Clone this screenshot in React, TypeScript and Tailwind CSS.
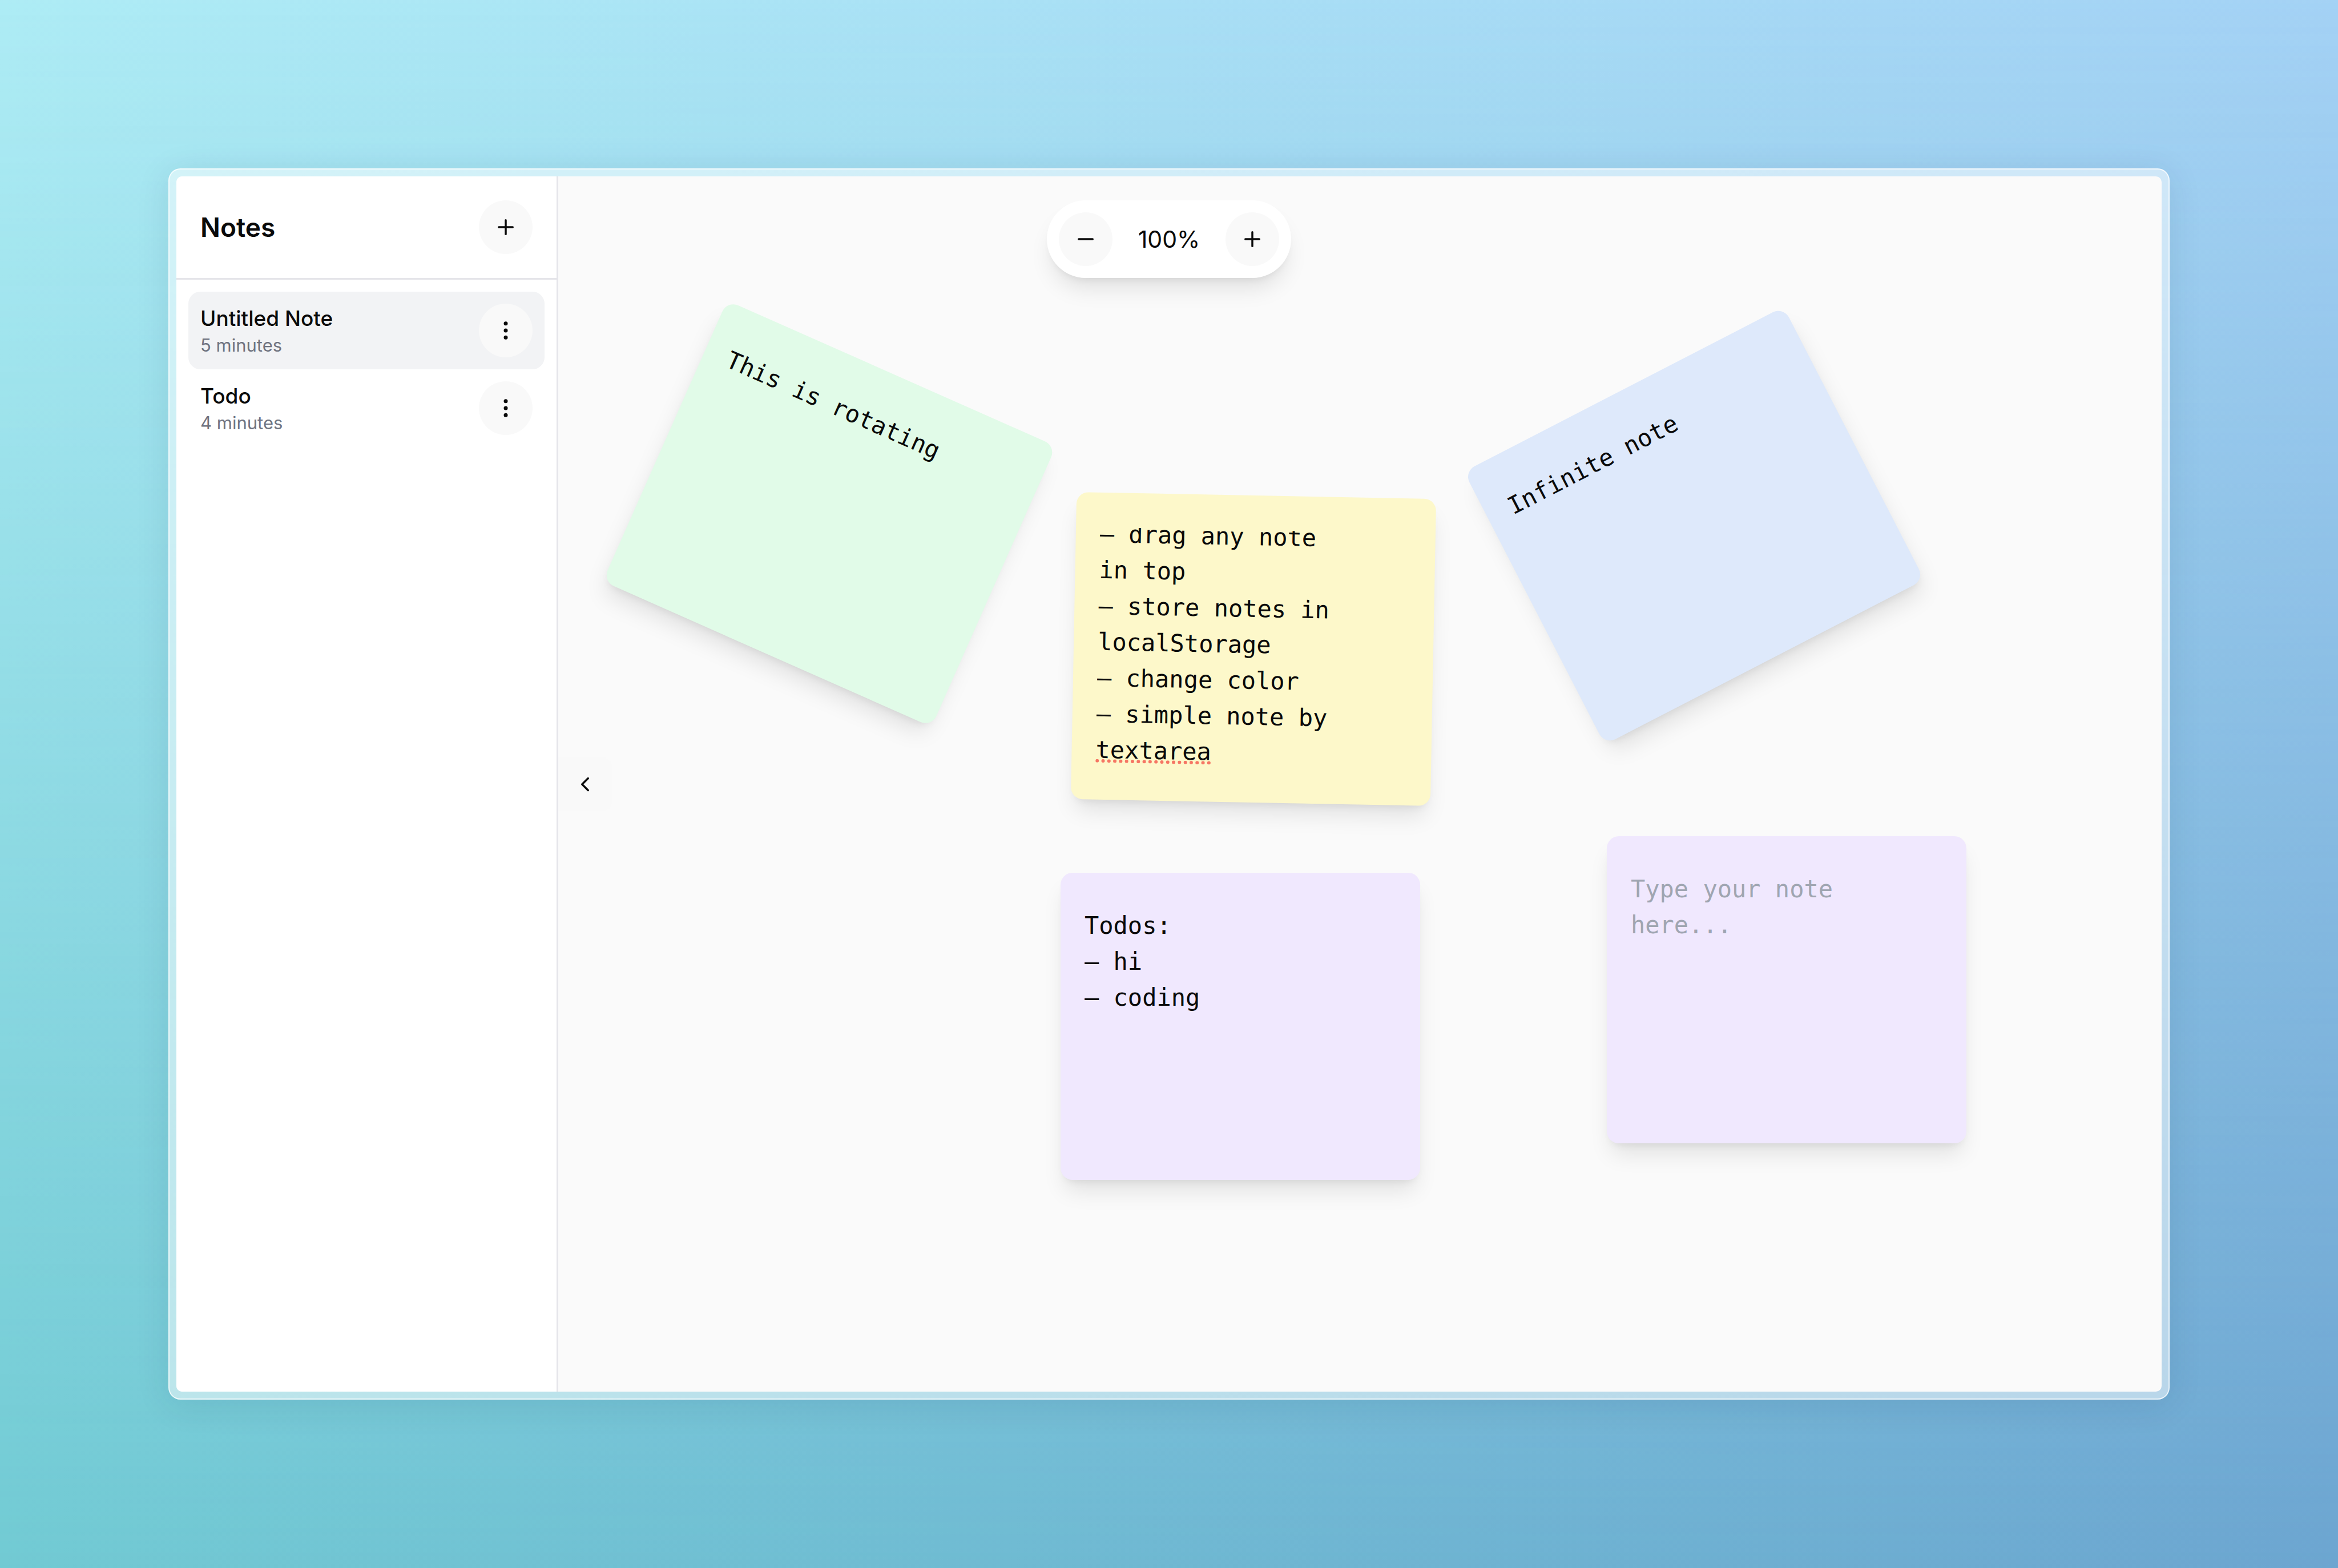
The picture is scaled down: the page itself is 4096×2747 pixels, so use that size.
import { useEffect, useRef, useState } from "react";
import { ChevronLeft, EllipsisVertical, Minus, Plus } from "lucide-react";

type StickyNote = {
  id: string;
  text: string;
  color: string;
  x: number;
  y: number;
  rotation: number;
  misspelled?: boolean;
};

const pages = [
  { id: "untitled", title: "Untitled Note", age: "5 minutes" },
  { id: "todo", title: "Todo", age: "4 minutes" },
];

const stickyNotes: StickyNote[] = [
  { id: "rotating", text: "This is rotating", color: "bg-[#e1fbe8]", x: 160, y: 322, rotation: 23.9 },
  {
    id: "features",
    text: "– drag any note in top\n– store notes in localStorage\n– change color\n– simple note by textarea",
    color: "bg-[#fdf8ca]",
    x: 903,
    y: 559,
    rotation: 1.1,
    misspelled: true,
  },
  { id: "infinite", text: "Infinite note", color: "bg-[#dee9fb]", x: 1675, y: 343, rotation: -27.3 },
  { id: "todos", text: "Todos:\n– hi\n– coding", color: "bg-[#f0e8fe]", x: 880, y: 1220, rotation: 0 },
  { id: "empty", text: "", color: "bg-[#f0e8fe]", x: 1837, y: 1156, rotation: 0 },
];

const roundButton =
  "flex size-[94px] shrink-0 items-center justify-center rounded-full bg-[#f9f9f9]";
const icon = "size-[42px]";
const lifted =
  "shadow-[0_26px_39px_-8px_rgba(0,0,0,0.1),0_10px_16px_-10px_rgba(0,0,0,0.1)]";

function Note({ note }: { note: StickyNote }) {
  const field = useRef<HTMLTextAreaElement>(null);

  // A note that overflows stays scrolled to its last line.
  useEffect(() => {
    if (field.current) field.current.scrollTop = field.current.scrollHeight;
  }, []);

  return (
    <article
      className={`absolute flex h-[538px] w-[630px] rounded-[21px] pt-[61px] pr-[158px] pb-[56px] pl-[42px] ${note.color} ${lifted}`}
      style={{ left: note.x, top: note.y, transform: `rotate(${note.rotation}deg)` }}
    >
      <textarea
        ref={field}
        aria-label="Note text"
        spellCheck={false}
        defaultValue={note.text}
        placeholder="Type your note here..."
        className="w-full resize-none overflow-hidden bg-transparent font-['DejaVu_Sans_Mono',monospace] text-[42px] leading-[63px] text-[#0a0a0a] outline-none placeholder:text-[#9fa5b1]"
      />
      {note.misspelled && (
        <svg
          aria-hidden="true"
          viewBox="0 0 202 6"
          className="absolute bottom-[65px] left-[42px] h-[6px] w-[202px]"
        >
          <line
            x1="3"
            y1="3"
            x2="200"
            y2="3"
            stroke="#f67663"
            strokeWidth="6"
            strokeLinecap="round"
            strokeDasharray="0 10.3"
          />
        </svg>
      )}
    </article>
  );
}

function Sidebar() {
  const [selected, setSelected] = useState("untitled");
  return (
    <aside className="flex w-[669px] shrink-0 flex-col border-r-[3px] border-[#e5e5ea] bg-white">
      <header className="flex items-center justify-between border-b-[3px] border-[#e5e5ea] p-[42px]">
        <h1 className="text-[46px] leading-[73px] font-semibold">Notes</h1>
        <button type="button" aria-label="New note" className={roundButton}>
          <Plus className={icon} />
        </button>
      </header>
      <ul className="p-[21px]">
        {pages.map((page) => (
          <li
            key={page.id}
            className={`flex items-center justify-between rounded-[21px] p-[21px] ${
              page.id === selected ? "bg-[#f2f3f5]" : ""
            }`}
          >
            <button type="button" onClick={() => setSelected(page.id)} className="flex-1 text-left">
              <span className="block text-[37px] leading-[52px] font-medium">{page.title}</span>
              <span className="block text-[31px] leading-[42px] text-[#6f7380]">{page.age}</span>
            </button>
            <button type="button" aria-label={`Options for ${page.title}`} className={roundButton}>
              <EllipsisVertical className={icon} />
            </button>
          </li>
        ))}
      </ul>
    </aside>
  );
}

function ZoomControl() {
  const [zoom, setZoom] = useState(100);
  return (
    <div
      className={`absolute top-[42px] left-1/2 flex -translate-x-1/2 items-center gap-[21px] rounded-full bg-white p-[21px] ${lifted}`}
    >
      <button
        type="button"
        aria-label="Zoom out"
        onClick={() => setZoom(zoom - 10)}
        className={roundButton}
      >
        <Minus className={icon} />
      </button>
      <span className="w-[156px] text-center text-[41px] leading-[63px]">{zoom}%</span>
      <button
        type="button"
        aria-label="Zoom in"
        onClick={() => setZoom(zoom + 10)}
        className={roundButton}
      >
        <Plus className={icon} />
      </button>
    </div>
  );
}

export default function App() {
  return (
    <div className="relative isolate flex min-h-screen bg-linear-to-r from-[#aeecf5] to-[#a4d2f5] p-[295px] font-[Inter,sans-serif] text-[#0a0a0a]">
      <div className="absolute inset-0 -z-10 bg-linear-to-r from-[#71cad3] to-[#6ca5d0] mask-linear-180 mask-linear-from-transparent mask-linear-to-black" />
      <div className="flex flex-1 rounded-[21px] border-2 border-white/70 bg-white/50 p-[12px] shadow-[0_8px_60px_rgba(0,50,80,0.11)]">
        <div className="relative flex flex-1 overflow-hidden rounded-[10px] bg-[#fafafa]">
          <Sidebar />
          <main className="relative flex flex-1 items-center overflow-hidden">
            <button
              type="button"
              aria-label="Collapse sidebar"
              className="flex size-[94px] items-center justify-center rounded-r-[16px] bg-[#f9f9f9]"
            >
              <ChevronLeft className={icon} />
            </button>
            {stickyNotes.map((note) => (
              <Note key={note.id} note={note} />
            ))}
          </main>
          <ZoomControl />
        </div>
      </div>
    </div>
  );
}
